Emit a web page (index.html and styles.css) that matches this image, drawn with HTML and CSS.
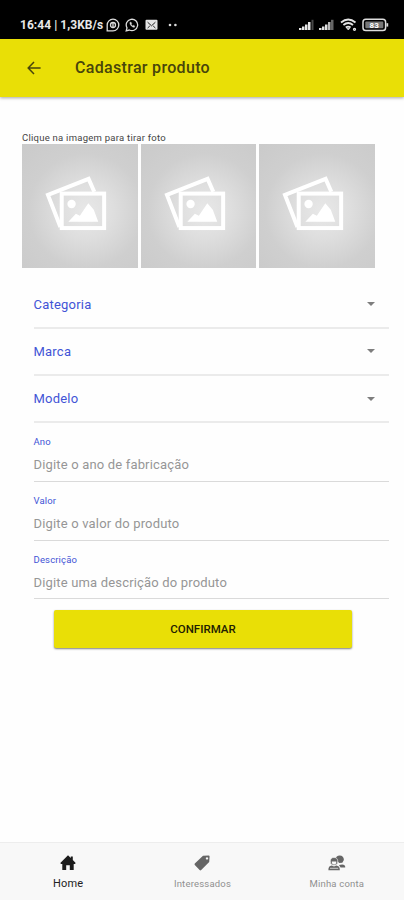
FILE: index.html
```
<!DOCTYPE html>
<html lang="pt-BR">
<head>
<meta charset="utf-8">
<title>Cadastrar produto</title>
<link rel="stylesheet" href="styles.css">
</head>
<body>
<svg class="defs" width="0" height="0" aria-hidden="true">
  <symbol id="photos" viewBox="0 0 116 124">
    <g fill="none" stroke="#fff" stroke-width="4">
      <path d="M38.5 83.3 26 51.2 66.8 35 72.5 48"/>
      <rect x="39.8" y="49.8" width="42.6" height="34.6"/>
    </g>
    <circle cx="49.7" cy="60.3" r="4.2" fill="#fff"/>
    <path fill="#fff" d="M46.5 78 54 70l4 2 8.5-12.5 5.500 6.500 4.500 12z"/>
  </symbol>
</svg>
<div class="screen">
  <div class="status">
    <span class="clock">16:44 | 1,3KB/s</span>
    <svg class="st-a" width="14" height="14" viewBox="0 0 14 14" fill="none" stroke="#ddd" stroke-width="1.3"><path d="M1.2 12.8V7a5.8 5.8 0 1 1 5.8 5.8z"/><circle cx="7" cy="7" r="2.5"/><path d="M7 4.8v4.4"/></svg>
    <svg class="st-b" width="14" height="14" viewBox="0 0 14 14" fill="none" stroke="#ddd" stroke-width="1.3"><path d="M1.2 12.8 2 9.8A5.7 5.7 0 1 1 4.3 12z"/><path d="M5 4.2c-.8 2 2 5.3 4.4 5.1l.4-1.3-1.4-.7-.8.6-1.4-1.6.5-.8-.6-1.3z" fill="#ddd" stroke-width=".4"/></svg>
    <svg class="st-c" width="13" height="12" viewBox="0 0 13 12"><rect x=".5" y=".8" width="12" height="10" rx="1" fill="#e4e4e4"/><path d="M2.6 3.2l3.9 3.6 3.9-3.6M2.600 9l2.200-2M10.400 9l-2.200-2" fill="none" stroke="#222" stroke-width="1"/></svg>
    <svg class="st-d" width="10" height="4" viewBox="0 0 10 4" fill="#ddd"><circle cx="2" cy="2" r="1.3"/><circle cx="7.4" cy="2" r="1.3"/></svg>
    <svg class="st-e" width="15" height="11" viewBox="0 0 15 11"><path d="M0 11V9h2.5v2zM3 11V7.500h2.500v3.500zM6 11V5.500h2.500v5.500zM9 11V3h2.500V11z" fill="#e8e8e8"/><path d="M12.500 11V.8h2V11z" fill="#484848"/></svg>
    <svg class="st-f" width="15" height="11" viewBox="0 0 15 11"><path d="M0 11V9h2.500v2zM3 11V7.500h2.500v3.500zM6 11V5.500h2.500v5.500z" fill="#e0e0e0"/><path d="M9 11V3h2.500V11z" fill="#bbb"/><path d="M12 11V.8h2.500V11z" fill="#666"/></svg>
    <svg class="st-g" width="17" height="14" viewBox="0 0 17 14" fill="none" stroke="#e4e4e4" stroke-width="1.8"><path d="M1 4.5Q8.2-1.600 15.5 4.5M3.4 7Q8.2 3 13 7M5.8 9.5q2.4-1.8 4.8 0"/><path d="M6.8 10.2h3L8.3 12z" fill="#e4e4e4" stroke-width=".7"/><circle cx="14.5" cy="11.3" r="1" stroke-width="1.3"/></svg>
    <svg class="st-h" width="27" height="14" viewBox="0 0 27 14"><rect x="1" y="1.2" width="22.6" height="11.4" rx="2.8" fill="none" stroke="#ddd" stroke-width="1.5"/><path d="M25.3 5.2v3.4" stroke="#ddd" stroke-width="1.8"/><rect x="3.3" y="3.5" width="18" height="6.8" rx="1" fill="#777"/><text x="12.2" y="10" text-anchor="middle" class="battery">83</text></svg>
  </div>
  <header class="toolbar">
    <svg class="back" width="14" height="14" viewBox="0 0 14 14" fill="none" stroke="#48450b" stroke-width="1.5"><path d="M13.6 7H1.4M7 1 1.2 7 7 13"/></svg>
    <h1>Cadastrar produto</h1>
  </header>
  <main>
    <p class="hint"><span>Clique na imagem para tirar foto</span></p>
    <div class="photos">
      <svg class="photo" viewBox="0 0 116 124"><use href="#photos"/></svg>
      <svg class="photo" viewBox="0 0 116 124"><use href="#photos"/></svg>
      <svg class="photo" viewBox="0 0 116 124"><use href="#photos"/></svg>
    </div>
    <div class="fields">
      <div class="select"><span>Categoria</span><i></i></div>
      <div class="select"><span>Marca</span><i></i></div>
      <div class="select"><span>Modelo</span><i></i></div>
      <div class="input"><label>Ano</label><span>Digite o ano de fabricação</span></div>
      <div class="input"><label>Valor</label><span>Digite o valor do produto</span></div>
      <div class="input"><label>Descrição</label><span>Digite uma descrição do produto</span></div>
    </div>
    <button class="confirm">CONFIRMAR</button>
  </main>
  <nav class="tabs">
    <div class="tab active">
      <svg width="16" height="16" viewBox="0 0 16 16"><path fill="#1c1c1c" d="M8 .3 10.800 3V1.600h2v3.300L15.700 8l-.7 1h-1.300v6H9.800v-4.800H6.200V15H2.300V9H1L.3 8z"/></svg>
      <span>Home</span>
    </div>
    <div class="tab">
      <svg width="16" height="16" viewBox="0 0 16 16"><path fill="#666" fill-rule="evenodd" d="M9 .8 14.6.5q1 0 1 1L15.2 7 7.2 15.1q-.8.7-1.6 0L.8 10Q.2 9.200.8 8.500zM13 2.200a1.200 1.200 0 1 0 .01 0z"/></svg>
      <span>Interessados</span>
    </div>
    <div class="tab">
      <svg width="18" height="16" viewBox="0 0 18 16"><path fill="#666" d="M7.500 4.500Q8 .5 11.700.5q4 0 4.200 4.500l-1.600 2.800-3 .2z"/><path fill="#666" d="M11 10q5.800-1.500 6.200 1.500v1h-4.600z"/><path fill="#666" stroke="#f8f8f8" stroke-width=".6" d="M2.300 7Q2 2.500 6 2.500T9.800 7Q9.500 10.300 6 10.300T2.300 7z"/><path fill="#f8f8f8" d="M3.800 6.500h4.500q.2 2.900-2.200 2.900t-2.300-2.900z"/><path fill="#666" d="M.4 15.200q-.2-4.200 3.400-4.600l2.200.9 2.200-.9q3.800.4 3.600 4.600z"/><path stroke="#f8f8f8" stroke-width=".7" d="M2 13.300h8.200"/></svg>
      <span>Minha conta</span>
    </div>
  </nav>
</div>
</body>
</html>
```
FILE: styles.css
```
* { box-sizing: border-box; }
body { margin: 0; font-family: Roboto, sans-serif; background: #fefefe; }
.defs { display: block; }
.screen { width: 404px; height: 900px; display: flex; flex-direction: column; overflow: hidden; }
.status { height: 39px; background: #000; color: #e8e8e8; display: flex; align-items: center; padding: 10px 0 0 20px; flex: none; }
.status svg { flex: none; }
.clock { width: 86px; font-size: 12px; font-weight: 700; letter-spacing: 0.05px; white-space: nowrap; }
.st-b { margin-left: 5px; }
.st-c { margin-left: 6px; }
.st-d { margin-left: 10px; }
.st-e { margin-left: 121px; }
.st-f { margin-left: 5px; }
.st-g { margin-left: 6px; }
.st-h { margin-left: 5px; }
.battery { font: 700 8px Roboto, sans-serif; fill: #fff; }
.toolbar { height: 58px; background: #e9df06; display: flex; align-items: center; padding-left: 27px; flex: none; box-shadow: 0 1px 3px rgba(0,0,0,.35); }
.toolbar h1 { margin: 0 0 0 34px; font-size: 16px; line-height: 20px; font-weight: 500; color: #48450b; letter-spacing: .32px; }
main { flex: 1; display: flex; flex-direction: column; }
.hint { margin: 34px 0 0 22px; height: 13px; font-size: 9.5px; line-height: 13px; color: #444; letter-spacing: .25px; white-space: nowrap; }
.photos { display: flex; gap: 3px; margin-left: 22px; }
.photo { width: 115.7px; height: 123.5px; background: radial-gradient(circle at 55% 54%, #e8e8e8 0, #dedede 30%, #cfcfcf 62%, #cacaca 100%); }
.fields { margin: 14px 15.5px 0 33.5px; }
.select { height: 47.3px; border-bottom: 2px solid #ebebeb; display: flex; align-items: center; justify-content: space-between; padding: 0 14px 0 0; color: #4254d6; font-size: 13px; letter-spacing: .22px; }
.select i { border: 4.5px solid transparent; border-top-color: #7e7e7e; border-bottom: 0; }
.input { height: 58.7px; border-bottom: 1px solid #dadada; padding-top: 12px; }
.input label { display: block; font-size: 9.5px; line-height: 14px; color: #4254d6; letter-spacing: .15px; }
.input span { display: block; margin-top: 7px; font-size: 13px; line-height: 18px; color: #969696; letter-spacing: .17px; white-space: nowrap; }
.confirm { margin: 11px 0 0 54px; width: 298px; height: 37.5px; border: 0; border-radius: 2px; background: #e9df06; color: #222002; font: 500 11.5px Roboto, sans-serif; box-shadow: 0 1px 2px rgba(0,0,0,.5); padding: 0; }
.tabs { height: 58px; background: #f8f8f8; border-top: 1px solid #ededed; display: flex; flex: none; padding-left: 1px; }
.tab { flex: 1; display: flex; flex-direction: column; align-items: center; padding-top: 12px; color: #909090; font-size: 9.5px; }
.tab span { line-height: 14px; margin-top: 6px; letter-spacing: .2px; }
.tab.active { color: #222; font-size: 11px; }
```
